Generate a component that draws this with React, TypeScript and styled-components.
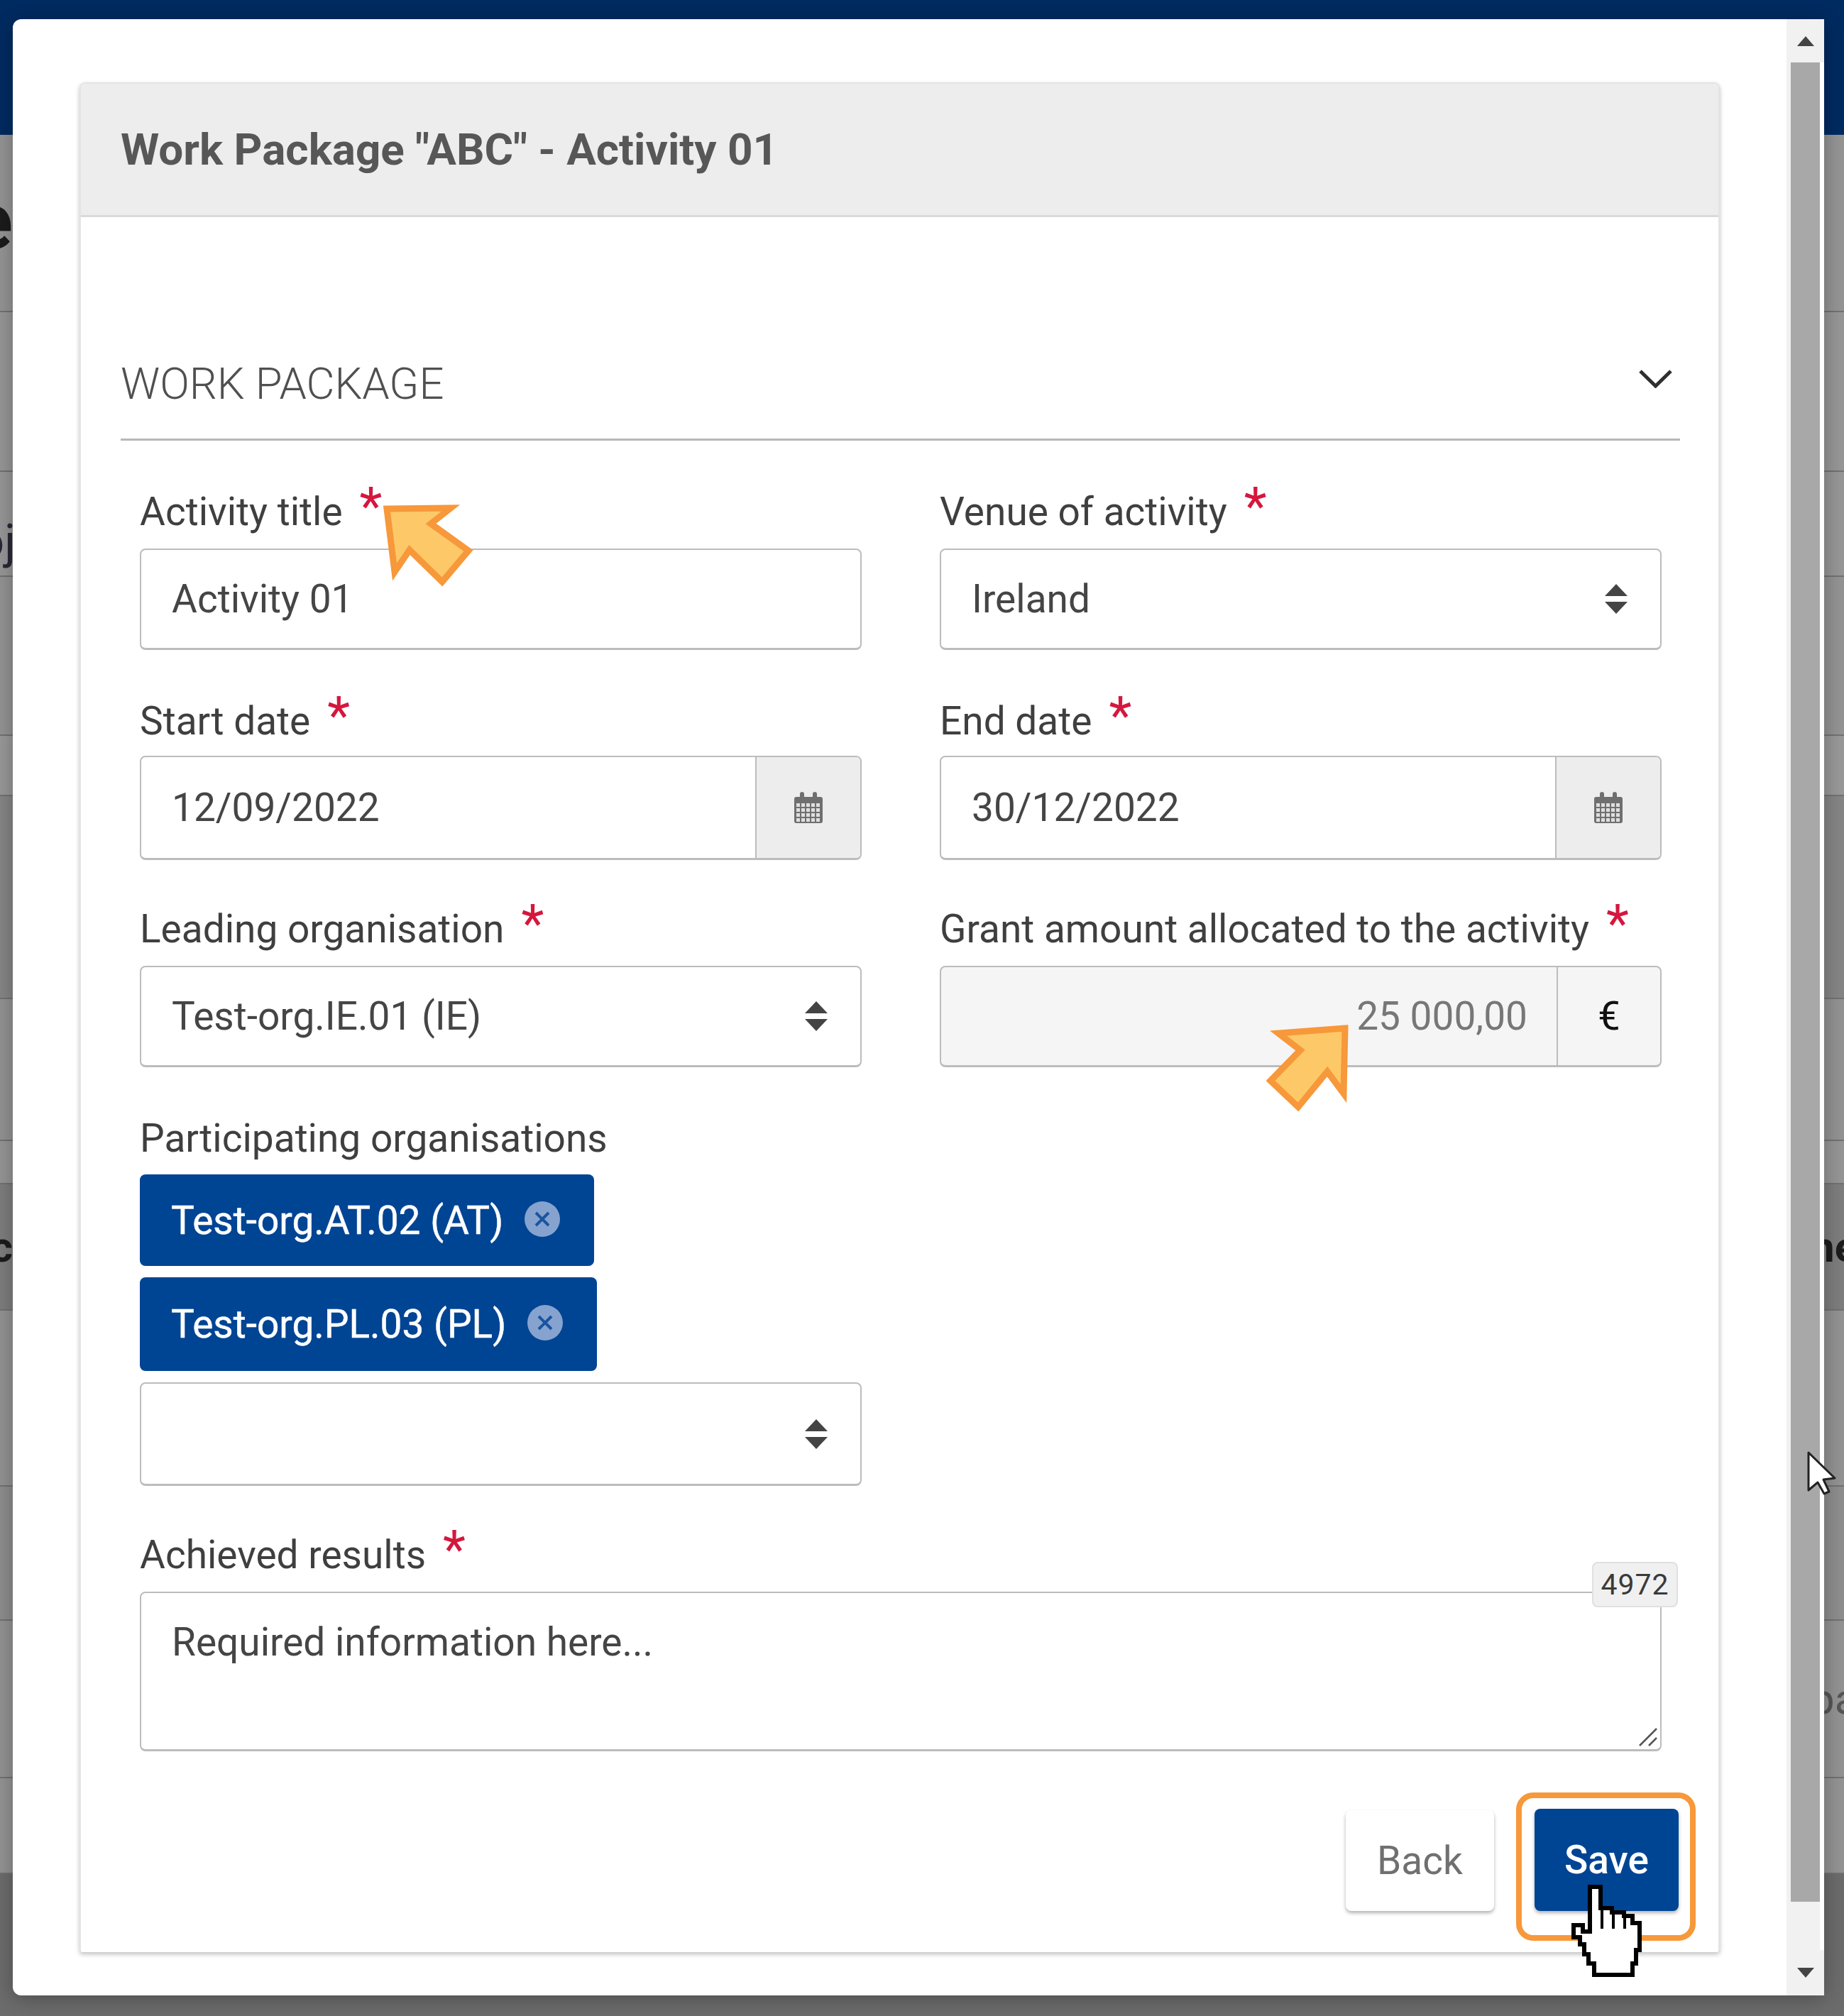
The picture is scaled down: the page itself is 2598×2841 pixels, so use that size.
import React from "react";
import styled, { createGlobalStyle } from "styled-components";

const Global = createGlobalStyle`
  html, body { margin: 0; padding: 0; }
  body { width: 2598px; height: 2841px; overflow: hidden; background: #6c6c6c; font-family: Roboto, "Liberation Sans", sans-serif; }
  * { box-sizing: border-box; }
`;

const Page = styled.div`
  position: relative;
  width: 2598px;
  height: 2841px;
  overflow: hidden;
`;

const Backdrop = styled.div`
  display: flex;
  flex-direction: column;
`;

const NavBar = styled.div`
  height: 190px;
  background: #002b61;
`;

const BackRow = styled.div<{ $h: number; $tone: string }>`
  height: ${(p) => p.$h}px;
  background: ${(p) => p.$tone};
  border-bottom: 2px solid #727272;
  display: grid;
  grid-template-columns: 18px 2549px 1fr;
  align-items: center;
`;

const LeftCut = styled.div<{ $size: number; $weight: number; $color: string; $top?: number; $lift?: number; $shift?: number }>`
  display: flex;
  justify-content: flex-end;
  white-space: nowrap;
  font-size: ${(p) => p.$size}px;
  font-weight: ${(p) => p.$weight};
  color: ${(p) => p.$color};
  padding-top: ${(p) => p.$top ?? 0}px;
  margin-bottom: ${(p) => p.$lift ?? 0}px;
  margin-right: ${(p) => -(p.$shift ?? 0)}px;
`;

const RightCut = styled.div<{ $weight: number; $color: string }>`
  grid-column: 3;
  margin-left: -16px;
  white-space: nowrap;
  font-size: 60px;
  font-weight: ${(p) => p.$weight};
  color: ${(p) => p.$color};
`;

const Dialog = styled.div`
  position: absolute;
  left: 18px;
  top: 27px;
  width: 2552px;
  height: 2785px;
  background: #fff;
  border-radius: 12px 0 0 12px;
  box-shadow: 0 4px 30px rgba(0, 0, 0, 0.3);
  display: flex;
  overflow: hidden;
`;

const DialogBody = styled.div`
  flex: 1;
  padding: 89px 94px 0 94px;
`;

const Card = styled.div`
  border: 2px solid #e4e4e4;
  border-bottom: 0;
  border-radius: 8px 8px 4px 4px;
  box-shadow: 0 3px 6px rgba(0, 0, 0, 0.25);
  background: #fff;
`;

const CardHeader = styled.div`
  height: 188px;
  background: #ededed;
  border-bottom: 3px solid #dadada;
  display: flex;
  align-items: center;
  padding-left: 56px;
  font-size: 62px;
  font-weight: 700;
  color: #575757;
  border-radius: 6px 6px 0 0;
`;

const CardBody = styled.div`
  padding: 0 54px 58px 56px;
`;

const SectionHead = styled.div`
  height: 315px;
  padding-bottom: 37px;
  border-bottom: 3px solid #b8b8b8;
  display: flex;
  align-items: flex-end;
  justify-content: space-between;
`;

const SectionTitle = styled.div`
  font-size: 61.5px;
  line-height: 80px;
  font-weight: 300;
  color: #505050;
`;

const Chevron = styled.svg`
  width: 47px;
  height: 26px;
  margin: 0 11px 34px 0;
  fill: none;
  stroke: #2f2f2f;
  stroke-width: 5;
`;

const FormGrid = styled.div`
  display: grid;
  grid-template-columns: 1fr 1fr;
  column-gap: 110px;
  row-gap: 59px;
  padding: 62px 26px 0 27px;
`;

const Field = styled.div<{ $wide?: boolean }>`
  position: relative;
  grid-column: ${(p) => (p.$wide ? "1 / -1" : "auto")};
  display: flex;
  flex-direction: column;
`;

const Label = styled.div<{ $nudge?: number; $h?: number }>`
  height: ${(p) => p.$h ?? 90}px;
  padding-top: ${(p) => p.$nudge ?? 0}px;
  line-height: 76px;
  font-size: 55px;
  color: #3f3f3f;
  white-space: nowrap;
`;

const Star = styled.span`
  display: inline-block;
  margin-left: 24px;
  font-size: 74px;
  line-height: 40px;
  color: #d5173e;
  vertical-align: 1px;
`;

const Control = styled.div<{ $h: number; $muted?: boolean }>`
  height: ${(p) => p.$h}px;
  border: 2px solid #bcbcbc;
  border-bottom-width: 3px;
  border-radius: 8px;
  background: ${(p) => (p.$muted ? "#f5f5f5" : "#fff")};
  display: flex;
  align-items: center;
  overflow: hidden;
`;

const Value = styled.div<{ $muted?: boolean }>`
  flex: 1;
  min-width: 0;
  padding: 0 41px 0 43px;
  font-size: 55px;
  color: ${(p) => (p.$muted ? "#777" : "#454545")};
  text-align: ${(p) => (p.$muted ? "right" : "left")};
  white-space: nowrap;
`;

const SortIcon = styled.svg`
  width: 32px;
  height: 42px;
  margin-right: 46px;
  fill: #444;
`;

const Addon = styled.div<{ $w: number; $plain?: boolean }>`
  width: ${(p) => p.$w}px;
  align-self: stretch;
  background: ${(p) => (p.$plain ? "transparent" : "#ededed")};
  border-left: 2px solid #bcbcbc;
  display: flex;
  align-items: center;
  justify-content: center;
  font-size: 56px;
  color: #111;
`;

const CalendarSvg = styled.svg`
  width: 40px;
  height: 44px;
`;

const Chips = styled.div`
  display: flex;
  flex-direction: column;
  align-items: flex-start;
  gap: 16px;
  margin-bottom: 16px;
`;

const Chip = styled.div<{ $h: number }>`
  height: ${(p) => p.$h}px;
  padding: 0 48px 0 44px;
  background: #004494;
  border-radius: 8px;
  color: #fff;
  font-size: 55px;
  -webkit-text-stroke: 0.5px #fff;
  display: flex;
  align-items: center;
  gap: 30px;
`;

const ChipClose = styled.svg`
  width: 50px;
  height: 50px;
  flex: none;
  margin-top: -4px;
`;

const TextBox = styled.div`
  position: relative;
  height: 225px;
  padding: 33px 43px;
  border: 2px solid #bcbcbc;
  border-bottom-width: 3px;
  border-radius: 8px;
  font-size: 55px;
  line-height: 72px;
  color: #454545;
  background: #fff;
`;

const Grip = styled.svg`
  position: absolute;
  right: 3px;
  bottom: 3px;
  width: 30px;
  height: 30px;
  stroke: #555;
  stroke-width: 2.5;
`;

const Counter = styled.div`
  position: absolute;
  right: -23px;
  top: 48px;
  width: 121px;
  height: 64px;
  border: 2px solid #e0e0e0;
  border-radius: 8px;
  background: #f0f0f0;
  font-size: 41px;
  color: #3a3a3a;
  display: flex;
  align-items: center;
  justify-content: center;
  letter-spacing: 1px;
`;

const Footer = styled.div`
  display: flex;
  justify-content: flex-end;
  align-items: flex-end;
  gap: 57px;
  margin-top: 81px;
  padding-right: 2px;
`;

const Button = styled.div<{ $primary?: boolean }>`
  position: relative;
  width: ${(p) => (p.$primary ? 203 : 209)}px;
  height: ${(p) => (p.$primary ? 144 : 142)}px;
  border-radius: 8px;
  background: ${(p) => (p.$primary ? "#004494" : "#fff")};
  color: ${(p) => (p.$primary ? "#fff" : "#707070")};
  font-size: 55px;
  font-weight: ${(p) => (p.$primary ? 500 : 400)};
  display: flex;
  align-items: center;
  justify-content: center;
  box-shadow: 0 3px 5px rgba(0, 0, 0, 0.3);
`;

const FocusFrame = styled.div`
  position: absolute;
  left: -26px;
  right: -24px;
  top: -23px;
  bottom: -42px;
  border: 8px solid #f7983a;
  border-radius: 24px;
  pointer-events: none;
`;

const Scrollbar = styled.div`
  width: 53px;
  display: flex;
  flex-direction: column;
  background: linear-gradient(to right, #f1f1f1 47px, #fff 47px);
`;

const ScrollButton = styled.div<{ $h: number }>`
  height: ${(p) => p.$h}px;
  background: #f1f1f1;
  width: 100%;
  display: flex;
  align-items: center;
  justify-content: center;
`;

const ScrollArrow = styled.svg`
  width: 24px;
  height: 14px;
  fill: #444;
`;

const ScrollThumb = styled.div`
  height: 2592px;
  width: 41px;
  margin-left: 6px;
  background: #a8a8a8;
`;

const ScrollRest = styled.div`
  flex: 1;
`;

const Overlay = styled.svg<{ $x: number; $y: number; $w: number; $h: number }>`
  position: absolute;
  left: ${(p) => p.$x}px;
  top: ${(p) => p.$y}px;
  width: ${(p) => p.$w}px;
  height: ${(p) => p.$h}px;
  overflow: visible;
`;

const Sort = () => (
  <SortIcon viewBox="0 0 32 42">
    <path d="M16 0 L32 17 H0 Z" />
    <path d="M16 42 L32 25 H0 Z" />
  </SortIcon>
);

const Calendar = () => (
  <CalendarSvg viewBox="0 0 40 44">
    <path
      fill="#6f6f6f"
      d="M3 7h5V3a3 3 0 0 1 6 0v4h12V3a3 3 0 0 1 6 0v4h5a3 3 0 0 1 3 3v31a3 3 0 0 1-3 3H3a3 3 0 0 1-3-3V10a3 3 0 0 1 3-3z"
    />
    <g fill="#dedede">
      {[16, 23, 30, 37].map((y) =>
        [3, 10, 17, 24, 31].map((x) => <rect key={`${x}-${y}`} x={x} y={y} width="5" height="5" />)
      )}
    </g>
  </CalendarSvg>
);

const CloseDot = () => (
  <ChipClose viewBox="0 0 50 50">
    <circle cx="25" cy="25" r="25" fill="#86a3cf" />
    <path d="M16 16 L34 34 M34 16 L16 34" stroke="#1a54a0" strokeWidth="4" fill="none" />
  </ChipClose>
);

const Req = () => <Star>*</Star>;

type Cut = { t: string; size?: number; weight: number; color: string; top?: number; lift?: number; shift?: number };
const rows: { h: number; tone: string; left?: Cut; right?: Cut }[] = [
  { h: 250, tone: "#959595", left: { t: "e", size: 112, weight: 700, color: "#1b1b1b", lift: 6 } },
  { h: 225, tone: "#979797" },
  { h: 148, tone: "#979797", left: { t: "oj", size: 66, weight: 400, color: "#2a2838", top: 50, shift: 4 } },
  { h: 224, tone: "#949494" },
  { h: 85, tone: "#999999" },
  { h: 286, tone: "#868686" },
  { h: 200, tone: "#939393" },
  { h: 61, tone: "#969696" },
  { h: 178, tone: "#7e7e7e", left: { t: "c", size: 60, weight: 700, color: "#1c1c1c" }, right: { t: "ne", weight: 700, color: "#1c1c1c" } },
  { h: 248, tone: "#939393" },
  { h: 189, tone: "#8e8e8e" },
  { h: 222, tone: "#939393", right: { t: "pa", weight: 400, color: "#565656" } },
  { h: 135, tone: "#949494" },
];

export default function App() {
  return (
    <Page>
      <Global />
      <Backdrop>
        <NavBar />
        {rows.map((r, i) => (
          <BackRow key={i} $h={r.h} $tone={r.tone}>
            {r.left ? (
              <LeftCut
                $size={r.left.size ?? 60}
                $weight={r.left.weight}
                $color={r.left.color}
                $top={r.left.top}
                $lift={r.left.lift}
                $shift={r.left.shift}
              >
                {r.left.t}
              </LeftCut>
            ) : null}
            {r.right ? (
              <RightCut $weight={r.right.weight} $color={r.right.color}>
                {r.right.t}
              </RightCut>
            ) : null}
          </BackRow>
        ))}
      </Backdrop>

      <Dialog>
        <DialogBody>
          <Card>
            <CardHeader>Work Package "ABC" - Activity 01</CardHeader>
            <CardBody>
              <SectionHead>
                <SectionTitle>WORK PACKAGE</SectionTitle>
                <Chevron viewBox="0 0 47 26">
                  <path d="M2 2 L23.5 23 L45 2" />
                </Chevron>
              </SectionHead>
              <FormGrid>
                <Field>
                  <Label>
                    Activity title
                    <Req />
                  </Label>
                  <Control $h={143}>
                    <Value>Activity 01</Value>
                  </Control>
                </Field>
                <Field>
                  <Label>
                    Venue of activity
                    <Req />
                  </Label>
                  <Control $h={143}>
                    <Value>Ireland</Value>
                    <Sort />
                  </Control>
                </Field>
                <Field>
                  <Label $nudge={3}>
                    Start date
                    <Req />
                  </Label>
                  <Control $h={147}>
                    <Value>12/09/2022</Value>
                    <Addon $w={148}>
                      <Calendar />
                    </Addon>
                  </Control>
                </Field>
                <Field>
                  <Label $nudge={3}>
                    End date
                    <Req />
                  </Label>
                  <Control $h={147}>
                    <Value>30/12/2022</Value>
                    <Addon $w={148}>
                      <Calendar />
                    </Addon>
                  </Control>
                </Field>
                <Field>
                  <Label>
                    Leading organisation
                    <Req />
                  </Label>
                  <Control $h={143}>
                    <Value>Test-org.IE.01 (IE)</Value>
                    <Sort />
                  </Control>
                </Field>
                <Field>
                  <Label>
                    Grant amount allocated to the activity
                    <Req />
                  </Label>
                  <Control $h={143} $muted>
                    <Value $muted>25 000,00</Value>
                    <Addon $w={146} $plain>€</Addon>
                  </Control>
                </Field>
                <Field>
                  <Label $nudge={3} $h={92}>Participating organisations</Label>
                  <Chips>
                    <Chip $h={129}>
                      Test-org.AT.02 (AT)
                      <CloseDot />
                    </Chip>
                    <Chip $h={132}>
                      Test-org.PL.03 (PL)
                      <CloseDot />
                    </Chip>
                  </Chips>
                  <Control $h={146}>
                    <Value />
                    <Sort />
                  </Control>
                </Field>
                <Field $wide>
                  <Label>
                    Achieved results
                    <Req />
                  </Label>
                  <TextBox>
                    Required information here...
                    <Grip viewBox="0 0 30 30">
                      <path d="M4 28 L28 4 M17 28 L28 17" />
                    </Grip>
                  </TextBox>
                  <Counter>4972</Counter>
                </Field>
              </FormGrid>
              <Footer>
                <Button>Back</Button>
                <Button $primary>
                  Save
                  <FocusFrame />
                </Button>
              </Footer>
            </CardBody>
          </Card>
        </DialogBody>
        <Scrollbar>
          <ScrollButton $h={61}>
            <ScrollArrow viewBox="0 0 24 14">
              <path d="M12 0 L24 14 H0 Z" />
            </ScrollArrow>
          </ScrollButton>
          <ScrollThumb />
          <ScrollRest />
          <ScrollButton $h={64}>
            <ScrollArrow viewBox="0 0 24 14">
              <path d="M0 0 H24 L12 14 Z" />
            </ScrollArrow>
          </ScrollButton>
        </Scrollbar>
      </Dialog>

      <Overlay $x={543} $y={714} $w={120} $h={110} viewBox="0 0 120 110">
        <path d="M2 3 L92 2 L64 24 L117 62 L80 106 L34 61 L13 92 Z" fill="#fdc968" stroke="#f7983a" strokeWidth="9" />
      </Overlay>
      <Overlay $x={1787} $y={1446} $w={110} $h={117} viewBox="0 0 110 117">
        <path d="M108 3 L14 10 L45 34 L3 77 L42 114 L83 64 L106 95 Z" fill="#fdc968" stroke="#f7983a" strokeWidth="9" />
      </Overlay>
      <Overlay $x={2213} $y={2656} $w={100} $h={130} viewBox="0 0 100 130">
        <path
          d="M27 3 H42 V33 H58 V39 H75 V44 H87 V54 H97 V92 H92 V111 H87 V127 H33 V111 H25 V98 H19 V84 H13 V74 H4 V57 H17 V66 H27 Z"
          fill="#fff"
          stroke="#000"
          strokeWidth="6"
        />
        <path d="M44 34 V62 M60 40 V62 M76 46 V62" stroke="#000" strokeWidth="4" fill="none" />
      </Overlay>
      <Overlay $x={2548} $y={2047} $w={38} $h={60} viewBox="0 0 38 60">
        <path d="M0 0 V53 L13 42 L22 58 L29 55 L21 38 L37 36 Z" fill="#fff" stroke="#222" strokeWidth="3" strokeLinejoin="round" />
      </Overlay>
    </Page>
  );
}
